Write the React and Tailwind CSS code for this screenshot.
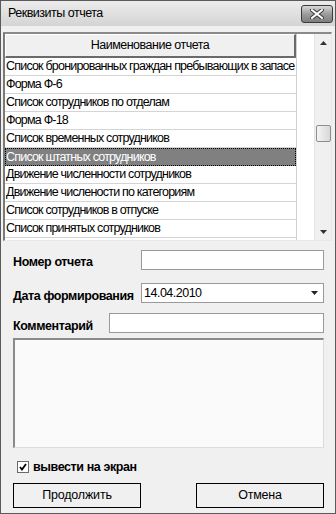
import React from 'react';

const rows = [
  'Список бронированных граждан пребывающих в запасе',
  'Форма Ф-6',
  'Список сотрудников по отделам',
  'Форма Ф-18',
  'Список временных сотрудников',
  'Список штатных сотрудников',
  'Движение численности сотрудников',
  'Движение числености по категориям',
  'Список сотрудников в отпуске',
  'Список принятых сотрудников',
];

const font = { fontFamily: '"Liberation Sans", Arial, sans-serif' };

const CloseButton = () => (
  <div className="w-[32px] h-[18px] rounded-[3px] border border-[#3a3a3a] bg-gradient-to-b from-[#d8d8d8] via-[#9c9c9c] to-[#7e7e7e] flex items-center justify-center">
    <svg width="14" height="10" viewBox="0 0 14 10">
      <path d="M2 1 L12 9 M12 1 L2 9" stroke="#3a3a3a" strokeWidth="4" strokeLinecap="square" />
      <path d="M2 1 L12 9 M12 1 L2 9" stroke="#ffffff" strokeWidth="2" strokeLinecap="square" />
    </svg>
  </div>
);

const Field = ({ className, children }) => (
  <div className={`h-[20px] bg-white border border-[#9a9a9a] ${className}`}>{children}</div>
);

const App = () => {
  return (
    <div className="w-[336px] h-[514px] bg-[#f0f0f0] border border-[#5a5a5a] flex flex-col text-black" style={font}>
      {/* заголовок */}
      <div className="h-[25px] shrink-0 flex items-center justify-between pl-[7px] pr-[2px] bg-gradient-to-b from-[#ececec] to-[#d4d4d4]">
        <span className="text-[12.5px] tracking-[-0.5px]">Реквизиты отчета</span>
        <CloseButton />
      </div>

      <div className="flex-1 flex flex-col pl-[2px] pr-[3px] pt-[6px]">
        {/* таблица */}
        <div className="h-[209px] flex bg-white border-t-2 border-l-2 border-t-[#8a8a8a] border-l-[#7a7a7a] border-b border-r border-b-[#e8e8e8] border-r-[#e8e8e8]">
          <div className="w-[292px] flex flex-col border-r border-[#d0d0d0]">
            <div className="h-[24px] shrink-0 flex items-center justify-center bg-[#f0f0f0] border-t border-l border-white border-b-2 border-r-2 border-b-[#6a6a6a] border-r-[#6a6a6a] text-[12.5px] tracking-[-0.5px]">
              Наименование отчета
            </div>
            {rows.map((r, i) => (
              <div
                key={i}
                className={
                  i === 5
                    ? 'h-[18px] shrink-0 flex items-center pl-[1px] text-[12.5px] tracking-[-0.8px] whitespace-nowrap overflow-hidden bg-[#808080] text-white outline-1 outline-dotted outline-black -outline-offset-1'
                    : 'h-[18px] shrink-0 flex items-center pl-[1px] text-[12.5px] tracking-[-0.8px] whitespace-nowrap overflow-hidden border-b border-[#d4d4d4]'
                }
              >
                {r}
              </div>
            ))}
          </div>
          <div className="flex-1" />
          {/* прокрутка */}
          <div className="w-[17px] bg-[#f0f0f0] border-l border-[#e4e4e4] flex flex-col items-center">
            <div className="h-[17px] flex items-center justify-center">
              <svg width="7" height="4" viewBox="0 0 7 4"><path d="M3.5 0 L7 4 L0 4 Z" fill="#333" /></svg>
            </div>
            <div className="h-[74px]" />
            <div className="w-[15px] h-[17px] rounded-[2px] border border-[#8e8e8e] bg-gradient-to-r from-[#f4f4f4] to-[#d8d8d8]" />
            <div className="flex-1" />
            <div className="h-[17px] flex items-center justify-center">
              <svg width="7" height="4" viewBox="0 0 7 4"><path d="M0 0 L7 0 L3.5 4 Z" fill="#333" /></svg>
            </div>
          </div>
        </div>

        {/* поля */}
        <div className="flex items-end mt-[9px] pl-[10px] pr-[8px]">
          <span className="text-[12.5px] tracking-[-0.4px] font-bold w-[128px] whitespace-nowrap leading-none pb-[2px]">Номер отчета</span>
          <Field className="flex-1" />
        </div>
        <div className="flex items-end mt-[13px] pl-[10px] pr-[8px]">
          <span className="text-[12.5px] tracking-[-0.4px] font-bold w-[128px] whitespace-nowrap leading-none pb-[1px]">Дата формирования</span>
          <Field className="flex-1 flex items-center justify-between pl-[2px] pr-[5px]">
            <span className="text-[12.5px] tracking-[-0.5px] leading-none">14.04.2010</span>
            <svg width="7" height="4" viewBox="0 0 7 4"><path d="M0 0 L7 0 L3.5 4 Z" fill="#222" /></svg>
          </Field>
        </div>
        <div className="flex items-end mt-[10px] pl-[10px] pr-[8px]">
          <span className="text-[12.5px] tracking-[-0.4px] font-bold w-[96px] whitespace-nowrap leading-none pb-[1px]">Комментарий</span>
          <Field className="flex-1" />
        </div>

        {/* мемо */}
        <div className="h-[110px] mt-[5px] ml-[10px] mr-[8px] bg-[#fafafa] border-t-2 border-l-2 border-t-[#8a8a8a] border-l-[#8a8a8a] border-b border-r border-b-[#dcdcdc] border-r-[#dcdcdc]" />

        <div className="flex items-center mt-[13px] pl-[14px] gap-[4px]">
          <div className="w-[12px] h-[12px] bg-white border border-[#6a6a6a] flex items-center justify-center">
            <svg width="8" height="8" viewBox="0 0 8 8"><path d="M1 4 L3 6.5 L7 1" stroke="#000" strokeWidth="1.8" fill="none" /></svg>
          </div>
          <span className="text-[12.5px] tracking-[-0.4px] font-bold leading-none">вывести на экран</span>
        </div>

        <div className="flex justify-between mt-[9px] pl-[10px] pr-[8px]">
          <div className="w-[128px] h-[25px] border border-black bg-[#f0f0f0] flex items-center justify-center text-[12.5px] tracking-[-0.2px]">Продолжить</div>
          <div className="w-[128px] h-[25px] border border-black bg-[#f0f0f0] flex items-center justify-center text-[12.5px] tracking-[-0.2px]">Отмена</div>
        </div>
      </div>
    </div>
  );
};

export default App;
